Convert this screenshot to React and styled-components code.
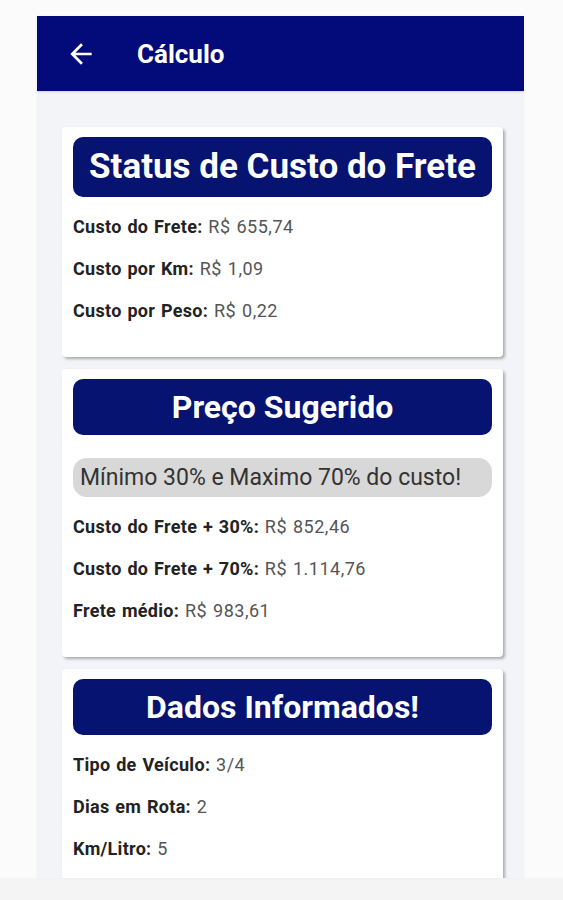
import React from 'react';
import styled, { createGlobalStyle } from 'styled-components';

const GlobalStyle = createGlobalStyle`
  body {
    margin: 0;
    background: #fbfbfb;
    font-family: Roboto, "Liberation Sans", sans-serif;
  }
`;

const cards = [
  {
    title: 'Status de Custo do Frete',
    big: true,
    rows: [
      ['Custo do Frete:', 'R$ 655,74'],
      ['Custo por Km:', 'R$ 1,09'],
      ['Custo por Peso:', 'R$ 0,22'],
    ],
  },
  {
    title: 'Preço Sugerido',
    note: 'Mínimo 30% e Maximo 70% do custo!',
    rows: [
      ['Custo do Frete + 30%:', 'R$ 852,46'],
      ['Custo do Frete + 70%:', 'R$ 1.114,76'],
      ['Frete médio:', 'R$ 983,61'],
    ],
  },
  {
    title: 'Dados Informados!',
    rows: [
      ['Tipo de Veículo:', '3/4'],
      ['Dias em Rota:', '2'],
      ['Km/Litro:', '5'],
    ],
  },
];

const App = () => {
  return (
    <Page>
      <GlobalStyle />
      <Screen>
        <Header>
          <BackButton>
            <svg width="32" height="32" viewBox="0 0 24 24" fill="#fff">
              <path d="M20 11H7.83l5.59-5.59L12 4l-8 8 8 8 1.41-1.41L7.83 13H20v-2z" />
            </svg>
          </BackButton>
          <HeaderTitle>Cálculo</HeaderTitle>
        </Header>
        <Content>
          {cards.map((card) => (
            <Card key={card.title}>
              <CardTitle big={card.big}>{card.title}</CardTitle>
              {card.note && <Note>{card.note}</Note>}
              <Rows>
                {card.rows.map(([label, value]) => (
                  <Row key={label}>
                    <Label>{label}</Label> <Value>{value}</Value>
                  </Row>
                ))}
              </Rows>
            </Card>
          ))}
        </Content>
      </Screen>
    </Page>
  );
};

const Page = styled.div`
  padding: 16px 0 0 37px;
  height: 884px;
  background: linear-gradient(#fbfbfb 0, #fbfbfb 878px, #f4f4f4 878px);
`;

const Screen = styled.div`
  width: 487px;
  height: 862px;
  background: #f3f4f7;
  overflow: hidden;
  box-shadow: 0 0 2px rgba(0, 0, 0, 0.06);
`;

const Header = styled.div`
  height: 75px;
  background: #030b7b;
  display: flex;
  align-items: center;
  padding-left: 28px;
  gap: 40px;
  box-shadow: 0 1px 2px rgba(0, 0, 0, 0.15);
`;

const BackButton = styled.span`
  display: flex;
  width: 32px;
  height: 32px;
`;

const HeaderTitle = styled.h1`
  margin: 0;
  color: #fff;
  font-size: 26px;
  font-weight: 700;
`;

const Content = styled.div`
  padding: 36px 21px 0 25px;
  display: flex;
  flex-direction: column;
  gap: 12px;
`;

const Card = styled.div`
  background: #fff;
  border-radius: 4px;
  box-shadow: 2px 2px 3px rgba(0, 0, 0, 0.3);
  padding: 10px 11px 25px;
`;

const CardTitle = styled.div`
  background: #061370;
  border-radius: 10px;
  color: #fff;
  font-weight: 700;
  text-align: center;
  font-size: ${({ big }) => (big ? '35px' : '32px')};
  height: ${({ big }) => (big ? '60px' : '56px')};
  line-height: ${({ big }) => (big ? '60px' : '56px')};
  white-space: nowrap;
`;

const Note = styled.div`
  margin-top: 23px;
  height: 39px;
  line-height: 39px;
  background: #d8d8d8;
  border-radius: 14px;
  padding-left: 7px;
  font-size: 23px;
  color: #333;
  white-space: nowrap;
`;

const Rows = styled.div`
  margin-top: 9px;
  display: flex;
  flex-direction: column;
`;

const Row = styled.div`
  height: 42px;
  line-height: 42px;
  font-size: 18px;
  letter-spacing: 0.3px;
  word-spacing: 1px;
`;

const Label = styled.span`
  font-weight: 700;
  color: #222;
`;

const Value = styled.span`
  color: #555;
  letter-spacing: 0.5px;
`;

export default App;
